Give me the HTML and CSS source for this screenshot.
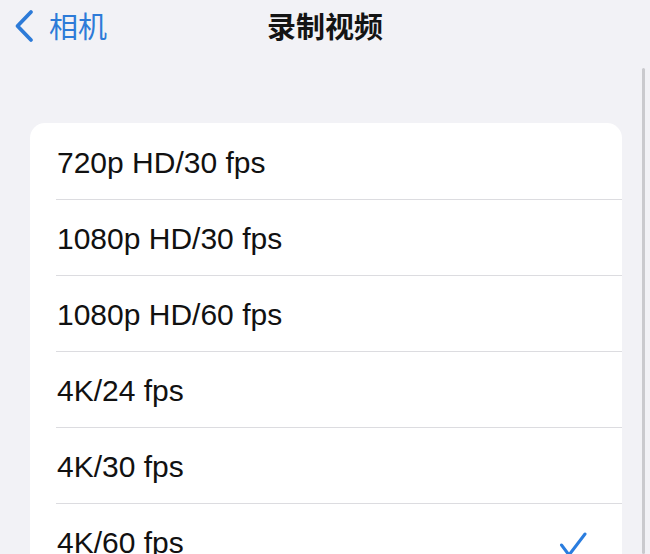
FILE: index.html
```html
<!DOCTYPE html>
<html lang="zh-CN">
<head>
    <meta charset="UTF-8">
    <meta name="viewport" content="width=device-width, initial-scale=1.0">
    <title>录制视频</title>
    <link rel="stylesheet" href="styles.css">
</head>
<body>
    <header class="nav-bar">
        <a class="back-link" href="#">
            <svg class="back-icon" width="20" height="34" viewBox="0 0 20 34">
                <path d="M17 3 L3.5 17 L17 31" fill="none" stroke="currentColor" stroke-width="3.8" stroke-linecap="round" stroke-linejoin="round"/>
            </svg>
            <span>相机</span>
        </a>
        <h1 class="nav-title">录制视频</h1>
        <div></div>
    </header>

    <div class="scroll-bar"></div>

    <ul class="option-list">
        <li class="option-row">720p HD/30 fps</li>
        <li class="option-row">1080p HD/30 fps</li>
        <li class="option-row">1080p HD/60 fps</li>
        <li class="option-row">4K/24 fps</li>
        <li class="option-row">4K/30 fps</li>
        <li class="option-row is-selected">
            <span>4K/60 fps</span>
            <svg class="check-icon" width="28" height="26" viewBox="0 0 28 26">
                <path d="M2.5 13 L10 23 L26 2" fill="none" stroke="currentColor" stroke-width="3" stroke-linecap="round" stroke-linejoin="round"/>
            </svg>
        </li>
    </ul>
</body>
</html>
```

FILE: styles.css
```css
body {
    margin: 0;
    background-color: #f2f2f6;
    font-family: "Liberation Sans", "Noto Sans CJK SC", Arial, sans-serif;
    color: #111;
    overflow: hidden;
}

.nav-bar {
    display: grid;
    grid-template-columns: 1fr auto 1fr;
    align-items: center;
    height: 51px;
    padding: 0 14px;
}

.back-link {
    display: flex;
    align-items: center;
    gap: 15px;
    color: #2d7bd8;
    text-decoration: none;
    font-family: "Noto Sans CJK SC", sans-serif;
    font-size: 29px;
    line-height: 1;
}

.back-icon {
    display: block;
}

.nav-title {
    margin: 0;
    font-family: "Noto Sans CJK SC", sans-serif;
    font-size: 29px;
    font-weight: 700;
    line-height: 1;
    color: #141414;
}

.scroll-bar {
    position: absolute;
    top: 68px;
    right: 5px;
    bottom: 0;
    width: 3px;
    border-radius: 2px;
    background-color: #cacace;
}

.option-list {
    list-style: none;
    margin: 72px 28px 0 30px;
    padding: 0 0 0 26px;
    background-color: #fff;
    border-radius: 15px;
}

.option-row {
    display: flex;
    align-items: center;
    justify-content: space-between;
    box-sizing: border-box;
    height: 76px;
    padding: 3px 35px 0 1px;
    font-size: 30px;
    color: #111;
}

.option-row + .option-row {
    border-top: 1px solid #dcdce0;
}

.check-icon {
    color: #2a7ddf;
    margin-top: 4px;
}
```
